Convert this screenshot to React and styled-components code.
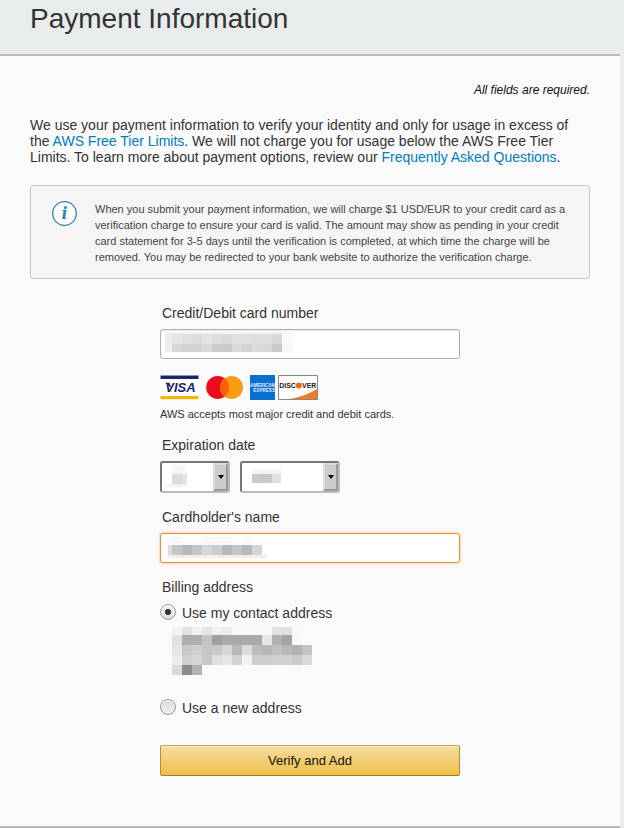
import React, { useState } from 'react';
import styled, { createGlobalStyle } from 'styled-components';

const GlobalStyle = createGlobalStyle`
  *, *::before, *::after { box-sizing: border-box; }
  body {
    margin: 0;
    background: #e8eced;
    color: #333;
    font-family: "Liberation Sans", Arial, Helvetica, sans-serif;
    font-size: 14px;
    line-height: 16px;
  }
`;

const Page = styled.div`
  padding-right: 4px;
`;

const Header = styled.header`
  padding: 3px 30px 19px;
`;

const Title = styled.h1`
  margin: 0;
  font-size: 28px;
  line-height: 32px;
  font-weight: 400;
`;

const Panel = styled.main`
  padding: 24px 30px 50px;
  background: #fafafa;
  border-top: 2px solid #bababa;
  border-bottom: 2px solid #bababa;
`;

const RequiredNote = styled.p`
  margin: 0 0 17px;
  color: #111;
  font-size: 12px;
  line-height: 20px;
  font-style: italic;
  text-align: right;
`;

const Intro = styled.p`
  margin: 0 0 20px;
`;

const Link = styled.a`
  color: #007dbc;
  text-decoration: none;
`;

const Notice = styled.aside`
  display: flex;
  gap: 18px;
  padding: 15px 20px 13px 21px;
  background: #f5f5f5;
  border: 1px solid #b5cedd;
  border-radius: 3px;
`;

const NoticeText = styled.p`
  margin: 0;
  flex: 1;
  color: #444;
  font-size: 11px;
  line-height: 16px;
`;

const InfoSvg = styled.svg`
  flex: none;
  display: block;
`;

const Form = styled.form`
  display: flex;
  flex-direction: column;
  gap: 16px;
  width: 100%;
  max-width: 300px;
  margin: 26px auto 0;
`;

const Field = styled.div`
  display: flex;
  flex-direction: column;
  gap: 8px;
`;

const Group = styled.fieldset`
  min-width: 0;
  margin: 0;
  padding: 0;
  border: 0;
`;

const Label = styled.label`
  padding-left: 2px;
  font-size: 14px;
  line-height: 16px;
`;

const Legend = styled.legend`
  padding: 0 0 0 2px;
  margin-bottom: 8px;
  font-size: 14px;
  line-height: 16px;
`;

const Control = styled.div`
  position: relative;
  display: flex;
  width: ${(p) => p.$width || '100%'};
`;

const TextInput = styled.input`
  width: 100%;
  height: 30px;
  padding: 4px 8px;
  background: #fff;
  border: 1px solid ${(p) => (p.$active ? '#e7913a' : '#a2b5b1')};
  border-radius: 3px;
  box-shadow: ${(p) => (p.$active ? '0 0 3px #f0b070' : 'inset 0 1px 1px #e8e8e8')};
  font: inherit;
  outline: none;
`;

const SelectRow = styled.div`
  display: flex;
  gap: 10px;
`;

const SelectBox = styled.select`
  appearance: none;
  width: 100%;
  height: 32px;
  padding: 0 18px 0 8px;
  background: #fff;
  border: 2px solid;
  border-color: #767676 #bbb #bbb #767676;
  border-radius: 3px;
  font: inherit;
`;

const SelectArrow = styled.span`
  position: absolute;
  top: 2px;
  right: 2px;
  bottom: 2px;
  display: grid;
  place-items: center;
  width: 15px;
  background: #ccc;
  border: 2px solid;
  border-color: #ddd #999 #999 #ddd;
  pointer-events: none;
`;

const MosaicSvg = styled.svg`
  display: block;
`;

const MosaicCover = styled.div`
  position: absolute;
  left: ${(p) => p.$left}px;
  top: ${(p) => p.$top}px;
  pointer-events: none;
`;

const CardRow = styled.div`
  display: flex;
  align-items: center;
  margin-bottom: -1px;
`;

const CardSvg = styled.svg`
  display: block;
  flex: none;
  margin-right: ${(p) => p.$gap || 0}px;
`;

const Hint = styled.p`
  margin: 0;
  font-size: 11px;
  line-height: 14px;
`;

const Choice = styled.label`
  display: flex;
  align-items: flex-start;
  gap: 6px;
  line-height: 20px;
`;

const Radio = styled.input`
  appearance: none;
  flex: none;
  width: 16px;
  height: 16px;
  margin: 1px 0 0;
  border: 1px solid #999;
  border-radius: 50%;
  background: ${(p) =>
    p.checked
      ? 'radial-gradient(circle, #333 0 2px, #555 3px, transparent 3px), linear-gradient(#f0f0f0, #ddd)'
      : 'linear-gradient(#ddd, #eee)'};
  box-shadow: inset 0 1px 1px #fff;
`;

const Address = styled.div`
  margin: 4px 0 23px 12px;
`;

const SubmitButton = styled.button`
  width: 100%;
  height: 31px;
  margin-top: 11px;
  padding: 0;
  background: linear-gradient(#f6dda0, #efbf48);
  border: 1px solid;
  border-color: #c99f47 #b98b2c #a57b28;
  border-radius: 2px;
  box-shadow: inset 0 1px 0 #fbeccb;
  color: #111;
  font-family: inherit;
  font-size: 13px;
  line-height: 16px;
`;

const cardBlocks = {
  columns: [0, 7, 17, 27, 37, 47, 57, 67, 77, 87, 97, 107, 117, 128],
  rows: [0, 2, 12, 20],
  shades: [
    'f3 f2 f2 f2 f2 f2 f2 f2 f2 f2 f2 f2 f4',
    'ec e6 e0 dc e3 de d9 e0 e1 de df d8 fa',
    'ee d7 d2 d3 d9 cc c8 d9 d3 dc d8 c9 f7',
  ],
};

const monthBlocks = {
  columns: [0, 7, 17, 22],
  rows: [0, 9, 19, 22],
  shades: ['-- f4 f8', '-- dc e2', 'f3 f1 f3'],
};

const yearBlocks = {
  columns: [0, 10, 20, 29],
  rows: [0, 4, 13],
  shades: ['f3 f3 f3', 'ca c8 e0'],
};

const nameBlocks = {
  columns: [0, 4, 14, 24, 34, 44, 54, 64, 74, 84, 94, 99],
  rows: [0, 8, 18, 21],
  shades: [
    'fa f8 fc fc f7 f8 f9 fc f9 fc fc',
    'dc c5 b9 c5 d7 cd b9 c5 b8 d5 --',
    'or or or or or or or or or or or',
  ],
};

const addressBlocks = {
  columns: [0, 10, 20, 30, 40, 50, 60, 70, 80, 90, 100, 110, 120, 130, 140],
  rows: [0, 8, 18, 28, 38, 48],
  shades: [
    'f2 e2 f1 e5 f0 ec f8 f9 f8 f8 e2 df f9 --',
    'e0 ae ae c5 9f aa a9 a9 a9 e6 b2 a4 f8 --',
    'e6 c8 cf c5 c9 d7 b9 dc bc b7 c0 b8 b2 c3',
    'ec d0 d5 c7 df e5 d4 f2 cd cd d1 d1 cc d9',
    'da 8c b2 -- -- -- -- -- -- -- -- -- -- --',
  ],
};

function Mosaic({ blocks }) {
  const { columns, rows, shades } = blocks;
  const width = columns[columns.length - 1];
  const height = rows[rows.length - 1];
  return (
    <MosaicSvg width={width} height={height} shapeRendering="crispEdges" aria-hidden="true">
      {shades.map((line, r) =>
        line.split(' ').map((shade, c) =>
          shade === '--' ? null : (
            <rect
              key={`${r}-${c}`}
              x={columns[c]}
              y={rows[r]}
              width={columns[c + 1] - columns[c]}
              height={rows[r + 1] - rows[r]}
              fill={shade === 'or' ? '#f8ece0' : `#${shade}${shade}${shade}`}
            />
          )
        )
      )}
    </MosaicSvg>
  );
}

function InfoIcon() {
  return (
    <InfoSvg width="25" height="25" viewBox="0 0 25 25" aria-hidden="true">
      <circle cx="12.5" cy="12.5" r="11.8" fill="#fff" stroke="#2b86ab" strokeWidth="1.3" />
      <text x="12.5" y="18" textAnchor="middle" fill="#2b86ab" fontFamily="DejaVu Serif, serif" fontSize="16" fontWeight="700" fontStyle="italic">i</text>
    </InfoSvg>
  );
}

function VisaLogo() {
  return (
    <CardSvg $gap={7} width="39" height="25" viewBox="0 0 39 25" role="img" aria-label="Visa">
      <path fill="#fff" d="M0 0h39v25H0z" />
      <path fill="#1a2470" d="M0.5 0.5h38v3.5h-38z" />
      <path fill="#f7b50c" d="M0.5 21h38v3.3h-38z" />
      <path fill="#1a2470" d="M5 7.8h4.5l1.8 5z" />
      <text x="20.5" y="17" textAnchor="middle" fill="#1a2470" fontFamily="Liberation Sans" fontSize="13" fontWeight="700" fontStyle="italic">VISA</text>
    </CardSvg>
  );
}

function MastercardLogo() {
  return (
    <CardSvg $gap={7} width="37" height="25" viewBox="0 0 37 25" role="img" aria-label="Mastercard">
      <circle cx="11.7" cy="12.4" r="11.5" fill="#ea0b1d" />
      <circle cx="25.5" cy="12.4" r="11.5" fill="#f79e15" />
      <path fill="#fd5f06" d="M18.6 3.2a11.5 11.5 0 0 1 0 18.4a11.5 11.5 0 0 1 0-18.4z" />
    </CardSvg>
  );
}

function AmexLogo() {
  return (
    <CardSvg $gap={3} width="25" height="25" viewBox="0 0 25 25" role="img" aria-label="American Express">
      <path fill="#0870ce" d="M0 0h25v25H0z" />
      <g fill="#fff" fillOpacity="0.9" fontFamily="Liberation Sans" fontWeight="700">
        <text x="12.5" y="12" textAnchor="middle" fontSize="4.6">AMERICAN</text>
        <text x="25" y="17.3" textAnchor="end" fontSize="4.6">EXPRESS</text>
      </g>
    </CardSvg>
  );
}

function DiscoverLogo() {
  return (
    <CardSvg width="40" height="25" viewBox="0 0 40 25" role="img" aria-label="Discover">
      <path fill="#fff" stroke="#888" d="M0.5 0.5h39v24h-39z" />
      <path fill="#ef7b22" d="M39 14v10H12Q28 21 39 14z" />
      <g fill="#222" fontFamily="Liberation Sans" fontSize="7" fontWeight="700">
        <text x="1.2" y="13">DISC</text>
        <text x="38.4" y="13" textAnchor="end">VER</text>
      </g>
      <circle cx="20.9" cy="10.4" r="3" fill="#ed6a1c" />
    </CardSvg>
  );
}

function Dropdown({ label, width, blocks, left, top }) {
  return (
    <Control $width={width}>
      <SelectBox aria-label={label}>
        <option value="" />
      </SelectBox>
      <SelectArrow>
        <svg width="6" height="4" viewBox="0 0 6 4" aria-hidden="true">
          <path d="M0 0h6L3 4z" />
        </svg>
      </SelectArrow>
      <MosaicCover $left={left} $top={top}>
        <Mosaic blocks={blocks} />
      </MosaicCover>
    </Control>
  );
}

export default function App() {
  const [address, setAddress] = useState('contact');
  return (
    <>
      <GlobalStyle />
      <Page>
        <Header>
          <Title>Payment Information</Title>
        </Header>
        <Panel>
          <RequiredNote>All fields are required.</RequiredNote>
          <Intro>
            We use your payment information to verify your identity and only for usage in excess of
            the <Link href="#free-tier">AWS Free Tier Limits</Link>. We will not charge you for usage
            below the AWS Free Tier Limits. To learn more about payment options, review
            our <Link href="#faq">Frequently Asked Questions</Link>.
          </Intro>
          <Notice>
            <InfoIcon />
            <NoticeText>
              When you submit your payment information, we will charge $1 USD/EUR to your credit card
              as a verification charge to ensure your card is valid. The amount may show as pending
              in your credit card statement for 3-5 days until the verification is completed, at
              which time the charge will be removed. You may be redirected to your bank website to
              authorize the verification charge.
            </NoticeText>
          </Notice>
          <Form onSubmit={(e) => e.preventDefault()}>
            <Field>
              <Label htmlFor="card-number">Credit/Debit card number</Label>
              <Control>
                <TextInput id="card-number" type="text" inputMode="numeric" />
                <MosaicCover $left={5} $top={3}>
                  <Mosaic blocks={cardBlocks} />
                </MosaicCover>
              </Control>
            </Field>
            <Field>
              <CardRow>
                <VisaLogo />
                <MastercardLogo />
                <AmexLogo />
                <DiscoverLogo />
              </CardRow>
              <Hint>AWS accepts most major credit and debit cards.</Hint>
            </Field>
            <Group>
              <Legend>Expiration date</Legend>
              <SelectRow>
                <Dropdown label="Month" width="70px" blocks={monthBlocks} left={5} top={4} />
                <Dropdown label="Year" width="100px" blocks={yearBlocks} left={12} top={9} />
              </SelectRow>
            </Group>
            <Field>
              <Label htmlFor="card-name">Cardholder's name</Label>
              <Control>
                <TextInput id="card-name" type="text" $active />
                <MosaicCover $left={8} $top={4}>
                  <Mosaic blocks={nameBlocks} />
                </MosaicCover>
              </Control>
            </Field>
            <Group>
              <Legend>Billing address</Legend>
              <Choice>
                <Radio
                  type="radio"
                  name="address"
                  checked={address === 'contact'}
                  onChange={() => setAddress('contact')}
                />
                Use my contact address
              </Choice>
              <Address>
                <Mosaic blocks={addressBlocks} />
              </Address>
              <Choice>
                <Radio
                  type="radio"
                  name="address"
                  checked={address === 'new'}
                  onChange={() => setAddress('new')}
                />
                Use a new address
              </Choice>
            </Group>
            <SubmitButton type="submit">Verify and Add</SubmitButton>
          </Form>
        </Panel>
      </Page>
    </>
  );
}
